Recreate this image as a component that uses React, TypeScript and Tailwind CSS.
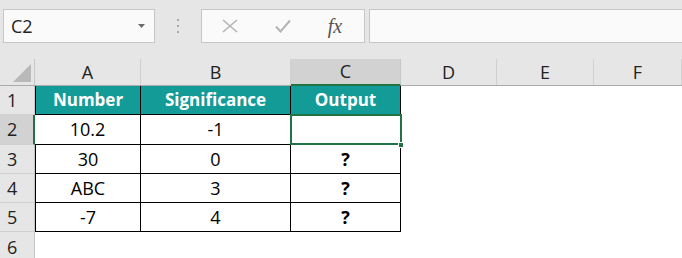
import React from "react";

const cols = [
  { key: "A", w: "w-[106px]" },
  { key: "B", w: "w-[150px]" },
  { key: "C", w: "w-[110px]" },
  { key: "D", w: "w-[96px]" },
  { key: "E", w: "w-[97px]" },
  { key: "F", w: "flex-1" },
];

const rows = [
  { n: 1, h: "h-[29px]", cells: ["Number", "Significance", "Output"], head: true },
  { n: 2, h: "h-[30px]", cells: ["10.2", "-1", ""] },
  { n: 3, h: "h-[29px]", cells: ["30", "0", "?"] },
  { n: 4, h: "h-[29px]", cells: ["ABC", "3", "?"] },
  { n: 5, h: "h-[29px]", cells: ["-7", "4", "?"] },
];

const Toolbar = () => (
  <div className="h-[59px] bg-[#e6e6e6] flex items-start pt-[9px] pl-[3px]">
    <div className="w-[152px] h-[34px] bg-[#fafafa] border border-[#c6c6c6] flex items-center justify-between pl-[7px] pr-[9px]">
      <span className="text-[18px] text-[#222]">C2</span>
      <svg width="7" height="4" viewBox="0 0 7 4">
        <path d="M0 0h7L3.5 4z" fill="#6a6a6a" />
      </svg>
    </div>
    <div className="w-[46px] h-[34px] flex flex-col items-center justify-center gap-[4px]">
      <div className="w-[2px] h-[2px] bg-[#a8a8a8]" />
      <div className="w-[2px] h-[2px] bg-[#a8a8a8]" />
      <div className="w-[2px] h-[2px] bg-[#a8a8a8]" />
    </div>
    <div className="w-[164px] h-[34px] bg-[#fafafa] border border-[#c6c6c6] flex items-center">
      <div className="w-[54px] flex justify-center pl-[2px]">
        <svg width="16" height="14" viewBox="0 0 16 14">
          <path d="M1 1l14 12M15 1L1 13" stroke="#b4b4b4" strokeWidth="1.6" fill="none" />
        </svg>
      </div>
      <div className="w-[54px] flex justify-center">
        <svg width="16" height="14" viewBox="0 0 16 14">
          <path d="M1 7.5l4.5 5L15 1.5" stroke="#b4b4b4" strokeWidth="2" fill="none" />
        </svg>
      </div>
      <div className="w-[54px] flex justify-center pr-[4px]">
        <span className="font-['Liberation_Serif'] italic text-[20px] text-[#555] leading-none">fx</span>
      </div>
    </div>
    <div className="w-[4px]" />
    <div className="flex-1 h-[34px] bg-[#fafafa] border border-[#c6c6c6] border-r-0" />
  </div>
);

const HeaderRow = () => (
  <div className="flex h-[27px] bg-[#e6e6e6] border-b border-[#ababab]">
    <div className="w-[35px] border-r border-[#c6c6c6] relative overflow-hidden">
      <svg className="absolute right-[3px] bottom-[3px]" width="18" height="18" viewBox="0 0 18 18">
        <path d="M18 0V18H0z" fill="#b9b9b9" />
      </svg>
    </div>
    {cols.map((c) => (
      <div
        key={c.key}
        className={`${c.w} flex items-center justify-center text-[18px] text-[#222] ${
          c.key === "C"
            ? "bg-[#d2d2d2] border-r border-[#c6c6c6] border-b-2 border-b-[#217346] -mb-px"
            : "border-r border-[#d0d0d0]"
        }`}
      >
        {c.key}
      </div>
    ))}
  </div>
);

export default function App() {
  return (
    <div className="w-[682px] h-[258px] overflow-hidden bg-white font-['Open_Sans',sans-serif]">
      <Toolbar />
      <HeaderRow />
      <div className="relative">
        {rows.map((r) => (
          <div key={r.n} className={`flex ${r.h}`}>
            <div
              className={`w-[35px] shrink-0 flex items-center pl-[7px] text-[18px] text-[#222] border-b border-[#d0d0d0] ${
                r.n === 2 ? "bg-[#d2d2d2] border-r-2 border-r-[#217346]" : "bg-[#e6e6e6] border-r border-r-[#c6c6c6]"
              }`}
            >
              {r.n}
            </div>
            {r.cells.map((v, i) => (
              <div
                key={i}
                className={`${cols[i].w} shrink-0 flex items-center justify-center border-r border-b border-black ${
                  i === 0 ? "border-l" : ""
                } ${i === 0 && r.n === 2 ? "border-l-0" : ""} ${
                  r.head ? "bg-[#129b97] text-white font-bold text-[17px]" : "text-[18px] text-black"
                } ${v === "?" ? "font-bold" : ""}`}
              >
                {v}
              </div>
            ))}
            <div className="flex-1" />
          </div>
        ))}
        <div className="flex h-[30px]">
          <div className="w-[35px] shrink-0 flex items-center pl-[7px] text-[18px] text-[#222] bg-[#e6e6e6] border-r border-[#c6c6c6]">
            6
          </div>
        </div>
        {/* active cell C2 */}
        <div className="absolute left-[290px] top-[28px] w-[112px] h-[31px] border-2 border-[#217346]" />
        <div className="absolute left-[398px] top-[56px] w-[6px] h-[6px] bg-[#217346] border border-white" />
      </div>
    </div>
  );
}
